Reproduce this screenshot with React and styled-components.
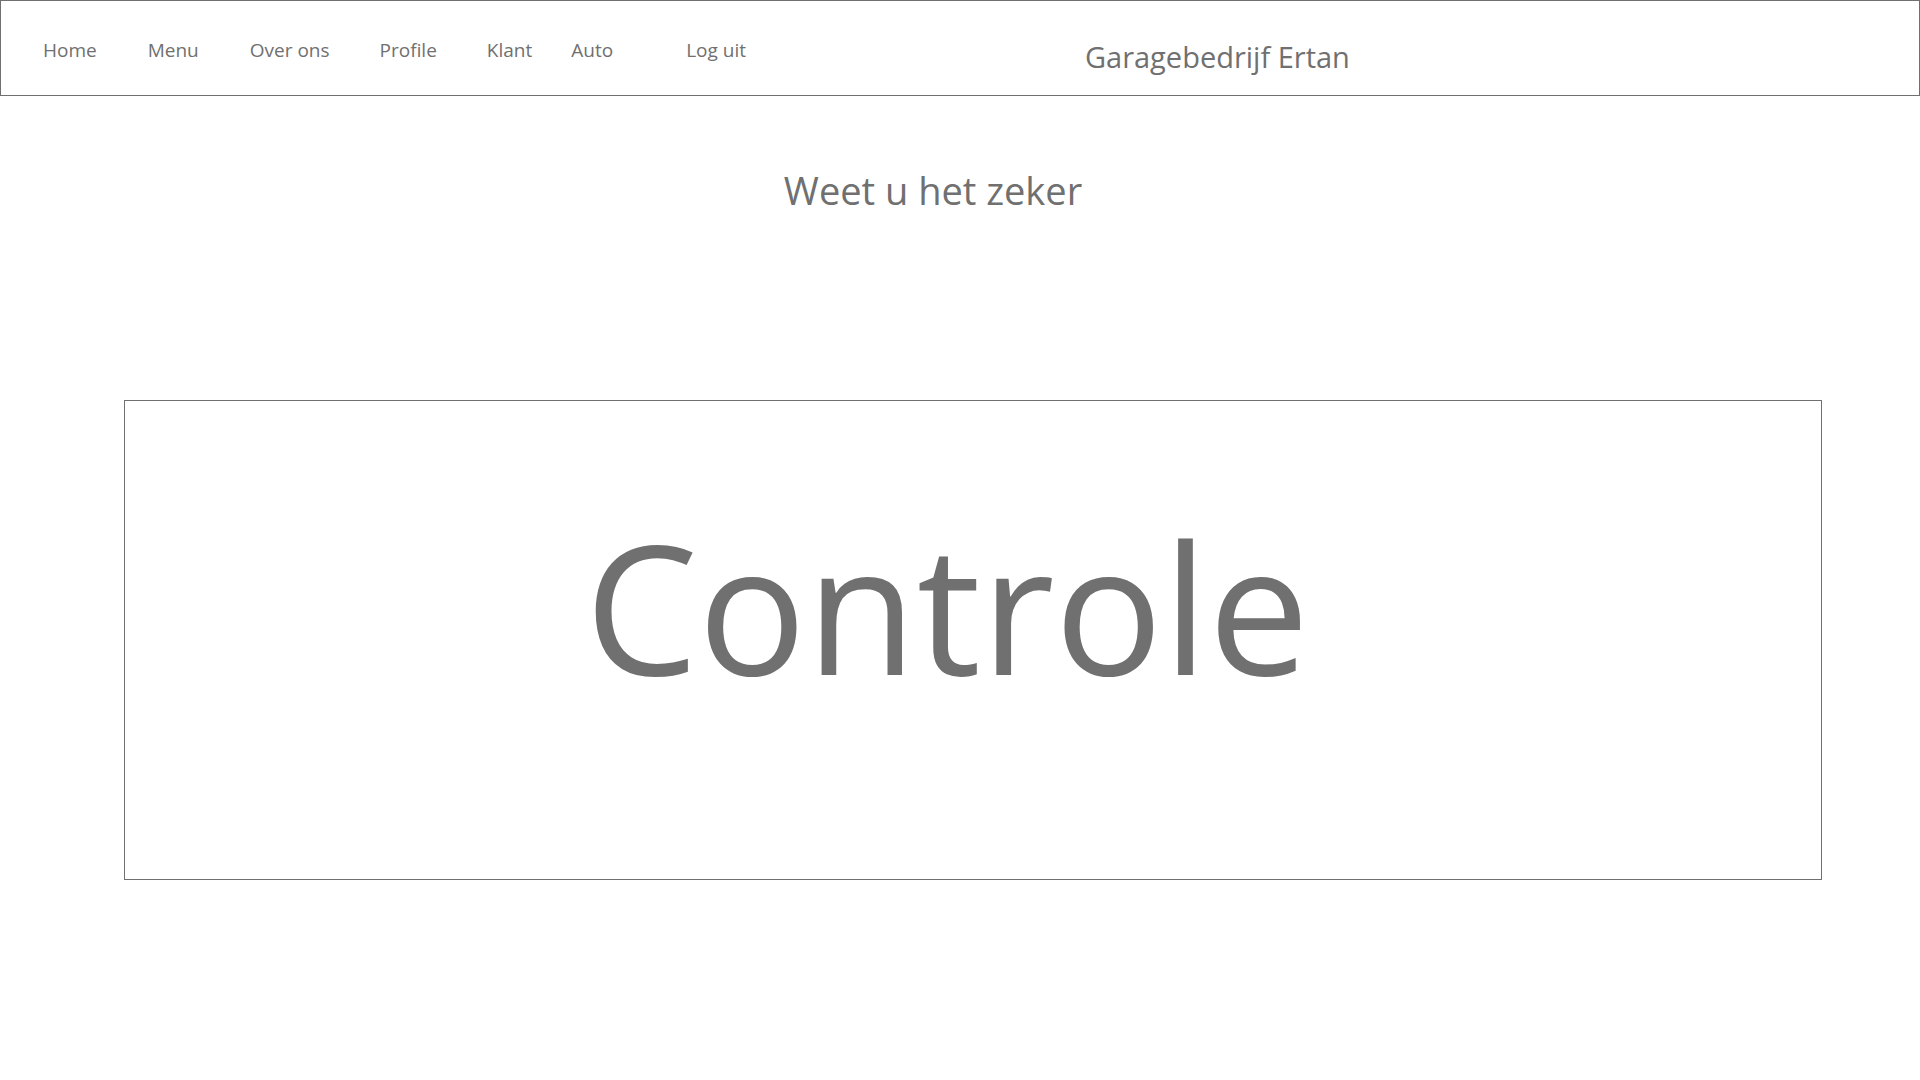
import styled, { createGlobalStyle } from "styled-components";

const links = [
  { label: "Home", space: 0 },
  { label: "Menu", space: 51 },
  { label: "Over ons", space: 51 },
  { label: "Profile", space: 50 },
  { label: "Klant", space: 50 },
  { label: "Auto", space: 39 },
  { label: "Log uit", space: 73 },
];

export default function App() {
  return (
    <>
      <GlobalStyle />
      <Header>
        <Nav>
          {links.map((l) => (
            <NavLink key={l.label} href="#" $space={l.space}>
              {l.label}
            </NavLink>
          ))}
        </Nav>
        <Brand>Garagebedrijf Ertan</Brand>
      </Header>
      <Main>
        <Question>Weet u het zeker</Question>
        <CheckBox>
          <CheckLabel>Controle</CheckLabel>
        </CheckBox>
      </Main>
    </>
  );
}

const GlobalStyle = createGlobalStyle`
  body {
    margin: 0;
    background: #ffffff;
    font-family: "Open Sans", "Noto Sans", sans-serif;
    color: #707070;
  }
`;

const Header = styled.header`
  box-sizing: border-box;
  display: flex;
  align-items: flex-start;
  width: 1920px;
  height: 96px;
  padding: 36px 0 0 42px;
  border: 1px solid #707070;
`;

const Nav = styled.nav`
  display: flex;
`;

const NavLink = styled.a`
  margin-left: ${(p) => p.$space}px;
  font-size: 19px;
  color: #707070;
  text-decoration: none;
`;

const Brand = styled.div`
  margin-left: 339px;
  font-size: 29px;
`;

const Main = styled.main`
  display: flex;
  flex-direction: column;
`;

const Question = styled.h1`
  margin: 68px 0 0;
  padding-right: 54px;
  text-align: center;
  font-size: 38px;
  font-weight: 400;
`;

const CheckBox = styled.button`
  box-sizing: border-box;
  display: flex;
  justify-content: center;
  align-items: flex-start;
  width: 1698px;
  height: 480px;
  margin: 184px 0 0 124px;
  padding: 82px 52px 0 0;
  border: 1px solid #707070;
  background: #ffffff;
  cursor: pointer;
  font-family: inherit;
`;

const CheckLabel = styled.span`
  font-size: 180px;
  line-height: normal;
  color: #707070;
`;
